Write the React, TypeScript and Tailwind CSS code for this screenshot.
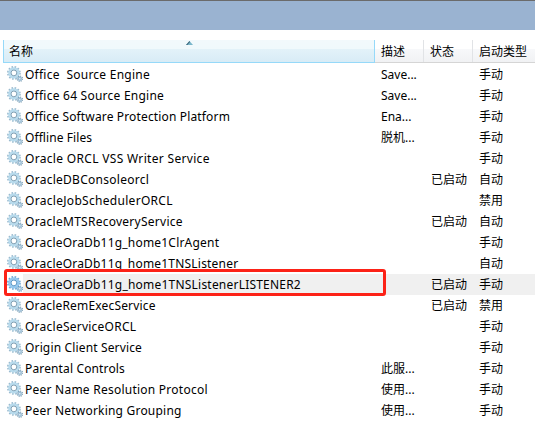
type Service = {
  name: string;
  desc?: string;
  started?: boolean;
  startup: string;
  selected?: boolean;
  tracking?: string;
};

const services: Service[] = [
  { name: "Office  Source Engine", desc: "Save...", startup: "手动", tracking: "tracking-[0.24px]" },
  { name: "Office 64 Source Engine", desc: "Save...", startup: "手动", tracking: "tracking-[0.24px]" },
  { name: "Office Software Protection Platform", desc: "Ena...", startup: "手动", tracking: "tracking-[0.15px]" },
  { name: "Offline Files", desc: "脱机...", startup: "手动", tracking: "tracking-[0.08px]" },
  { name: "Oracle ORCL VSS Writer Service", startup: "手动", tracking: "tracking-[0.32px]" },
  { name: "OracleDBConsoleorcl", started: true, startup: "自动", tracking: "tracking-[0.27px]" },
  { name: "OracleJobSchedulerORCL", startup: "禁用", tracking: "tracking-[0.3px]" },
  { name: "OracleMTSRecoveryService", started: true, startup: "自动", tracking: "tracking-[0.26px]" },
  { name: "OracleOraDb11g_home1ClrAgent", startup: "手动", tracking: "tracking-[0.2px]" },
  { name: "OracleOraDb11g_home1TNSListener", startup: "自动", tracking: "tracking-[0.2px]" },
  { name: "OracleOraDb11g_home1TNSListenerLISTENER2", started: true, startup: "手动", selected: true, tracking: "tracking-[0.21px]" },
  { name: "OracleRemExecService", started: true, startup: "禁用", tracking: "tracking-[0.17px]" },
  { name: "OracleServiceORCL", startup: "手动", tracking: "tracking-[0.24px]" },
  { name: "Origin Client Service", startup: "手动", tracking: "tracking-[0.15px]" },
  { name: "Parental Controls", desc: "此服...", startup: "手动", tracking: "tracking-[0.14px]" },
  { name: "Peer Name Resolution Protocol", desc: "使用...", startup: "手动", tracking: "tracking-[0.24px]" },
  { name: "Peer Networking Grouping", desc: "使用...", startup: "手动", tracking: "tracking-[0.21px]" },
];

function Gears({ selected }: { selected?: boolean }) {
  const teeth = selected ? "#6aa5d3" : "#9abace";
  const body = selected ? "#94c8ee" : "#b8dbed";
  const rim = selected ? "#5a97c6" : "#7e9fb4";
  return (
    <svg className="h-4 w-4 shrink-0" viewBox="0 0 16 16" fill="none">
      <circle cx="6.9" cy="6.9" r="6" stroke={teeth} strokeWidth="1.8" strokeDasharray="1.6 1.54" />
      <circle cx="6.9" cy="6.9" r="4.4" stroke={body} strokeWidth="2.6" />
      <circle cx="6.9" cy="6.9" r="2.9" stroke={rim} strokeWidth="1" fill="#fff" />
      <circle cx="12.8" cy="12.7" r="2.6" stroke={rim} strokeWidth="1.3" strokeDasharray="1.1 0.94" />
      <circle cx="12.8" cy="12.7" r="1.5" stroke="#9dbfd6" strokeWidth="1.4" fill="#e9f4fa" />
    </svg>
  );
}

function Row({ s }: { s: Service }) {
  return (
    <div className="flex h-[21px] items-start pl-[7px]">
      <Gears selected={s.selected} />
      <div className={`flex h-full flex-1 items-start whitespace-pre pt-px ${s.selected ? "bg-[#f0f0f0]" : ""}`}>
        <span className={`w-[358px] pl-0.5 ${s.tracking ?? ""}`}>{s.name}</span>
        <span className="w-[50px]">{s.desc}</span>
        <span className="w-[48px]">{s.started ? "已启动" : ""}</span>
        <span>{s.startup}</span>
      </div>
    </div>
  );
}

export default function App() {
  return (
    <div className="relative h-[423px] w-[535px] overflow-hidden bg-white font-['Noto_Sans','Noto_Sans_CJK_SC',sans-serif] text-[12px] leading-[20px] text-black">
      <div className="h-[30px] border-t border-[#6b6b6b] bg-[#9ab3d1]" />
      <div className="mt-2.5 flex h-[23px] whitespace-nowrap pl-[3px]">
        <div className="relative w-[372px] border-x border-b border-[#96d9f9] bg-[linear-gradient(#f2f9fc_0,#f0f9fc_9px,#e3f2f9_9px,#d8ecf6_100%)] pl-[5px] pt-0.5">
          名称
          <svg className="absolute left-[182px] top-px h-1 w-[7px]" viewBox="0 0 7 4">
            <path d="M3.5 0 7 4H0Z" fill="#79b6cb" />
            <path d="M3.5 0 0 4h1.3L4 1Z" fill="#3d6578" />
          </svg>
        </div>
        <div className="flex flex-1 border-b border-[#d5d5d5] bg-[linear-gradient(#fff_0,#fff_9px,#f7f8fa_9px,#f1f2f4_100%)]">
          <div className="w-[49px] border-r border-[#e1e3e6] pl-1.5 pt-0.5">描述</div>
          <div className="w-[49px] border-r border-[#e1e3e6] pl-1.5 pt-0.5">状态</div>
          <div className="pl-1.5 pt-0.5">启动类型</div>
        </div>
      </div>
      <div className="pt-px [&_svg]:mt-0.5">
        {services.map((s) => (
          <Row key={s.name} s={s} />
        ))}
      </div>
      <div className="absolute left-1 top-[269px] h-[27px] w-[382px] rounded-[3px] border-3 border-[#fc2217]" />
    </div>
  );
}
